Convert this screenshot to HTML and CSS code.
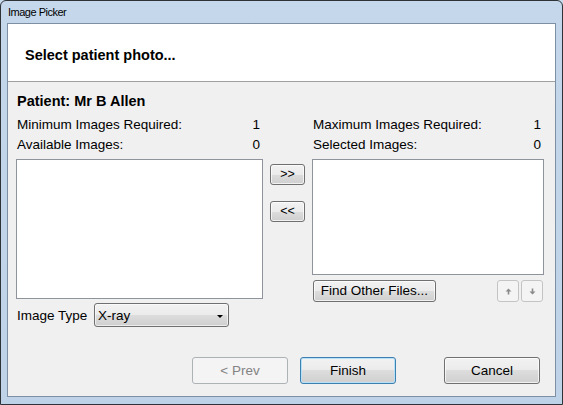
FILE: index.html
```html
<!DOCTYPE html>
<html>
<head>
<meta charset="utf-8">
<title>Image Picker</title>
<link rel="stylesheet" href="styles.css">
</head>
<body>
<div class="window">
  <div class="titlebar">Image Picker</div>
  <div class="client">
    <div class="header">Select patient photo...</div>
    <div class="body">
      <div class="patient">Patient: Mr B Allen</div>
      <div class="panes">
        <div class="col col-left">
          <div class="info">
            <div class="info-row"><span>Minimum Images Required:</span><span>1</span></div>
            <div class="info-row"><span>Available Images:</span><span>0</span></div>
          </div>
          <div class="listbox list-left"></div>
          <div class="type-row">
            <span class="type-label">Image Type</span>
            <div class="combo"><span>X-ray</span><span class="combo-arrow"></span></div>
          </div>
        </div>
        <div class="col col-mid">
          <button class="btn btn-move">&gt;&gt;</button>
          <button class="btn btn-move">&lt;&lt;</button>
        </div>
        <div class="col col-right">
          <div class="info">
            <div class="info-row"><span>Maximum Images Required:</span><span>1</span></div>
            <div class="info-row"><span>Selected Images:</span><span>0</span></div>
          </div>
          <div class="listbox list-right"></div>
          <div class="tools-row">
            <button class="btn btn-find">Find Other Files...</button>
            <div class="arrows">
              <button class="btn-arrow" aria-label="Move up"><svg width="7" height="7" viewBox="0 0 7 7"><path d="M3.5 0.5 L6.5 3.5 L4.3 3.5 L4.3 6.5 L2.7 6.5 L2.7 3.5 L0.5 3.5 Z" fill="#8a8a8a"/></svg></button>
              <button class="btn-arrow" aria-label="Move down"><svg width="7" height="7" viewBox="0 0 7 7"><path d="M3.5 6.5 L6.5 3.5 L4.3 3.5 L4.3 0.5 L2.7 0.5 L2.7 3.5 L0.5 3.5 Z" fill="#8a8a8a"/></svg></button>
            </div>
          </div>
        </div>
      </div>
      <div class="footer">
        <button class="btn btn-footer btn-disabled">&lt; Prev</button>
        <button class="btn btn-footer btn-default">Finish</button>
        <button class="btn btn-footer btn-cancel">Cancel</button>
      </div>
    </div>
  </div>
</div>
</body>
</html>
```

FILE: styles.css
```css
* { box-sizing: border-box; }

html, body {
  margin: 0;
  padding: 0;
  background: #c9dbee;
}

body {
  font-family: "Liberation Sans", Arial, sans-serif;
  font-size: 13.5px;
  color: #000;
}

.window {
  width: 563px;
  height: 405px;
  border: 1px solid #2e3338;
  border-radius: 6px 6px 0 0;
  background: linear-gradient(#c6d8ec, #c3d6ea 30px, #bfd3e8);
  padding: 0 6px 7px 6px;
  display: flex;
  flex-direction: column;
}

.titlebar {
  height: 22px;
  line-height: 22px;
  font-size: 11px;
  padding-left: 1px;
  color: #000;
  letter-spacing: -0.5px;
}

.client {
  flex: 1;
  border: 1px solid #7d8fa3;
  background: #f0f0f0;
  display: flex;
  flex-direction: column;
}

.header {
  height: 58px;
  background: #fff;
  border-bottom: 1px solid #a0a0a0;
  padding: 23px 0 0 17px;
  font-weight: bold;
  font-size: 14.5px;
  line-height: 16px;
}

.body {
  flex: 1;
  display: flex;
  flex-direction: column;
  padding: 0 15px 12px 8px;
}

.patient {
  margin-top: 11px;
  font-weight: bold;
  font-size: 14.5px;
  line-height: 16px;
  padding-left: 1px;
}

.panes {
  margin-top: 6px;
  display: grid;
  grid-template-columns: 247px 49px 232px;
}

.col {
  display: flex;
  flex-direction: column;
}

.info-row {
  display: flex;
  justify-content: space-between;
  line-height: 20px;
  padding: 0 3px 0 1px;
}

.listbox {
  margin-top: 4px;
  background: #fff;
  border: 1px solid #8f949c;
}

.list-left { height: 140px; }
.list-right { height: 116px; }

.type-row {
  margin-top: 4px;
  display: flex;
  align-items: center;
  height: 24px;
}

.type-label {
  width: 78px;
  padding-left: 1px;
}

.combo {
  width: 135px;
  height: 24px;
  border: 1px solid #707070;
  border-radius: 3px;
  background: linear-gradient(#f2f2f2 0%, #ebebeb 50%, #dddddd 50%, #cfcfcf 100%);
  box-shadow: inset 0 0 0 1px rgba(255,255,255,0.6);
  display: flex;
  align-items: center;
  justify-content: space-between;
  padding: 0 5px 0 3px;
}

.combo-arrow {
  width: 0;
  height: 0;
  border-left: 3px solid transparent;
  border-right: 3px solid transparent;
  border-top: 3px solid #000;
  margin-top: 2px;
}

.btn {
  font-family: "Liberation Sans", Arial, sans-serif;
  font-size: 13.5px;
  color: #000;
  border: 1px solid #707070;
  border-radius: 3px;
  background: linear-gradient(#f2f2f2 0%, #ebebeb 50%, #dddddd 50%, #cfcfcf 100%);
  box-shadow: inset 0 0 0 1px rgba(255,255,255,0.7);
  padding: 0;
  margin: 0;
  line-height: 1;
}

.col-mid {
  padding-top: 49px;
  padding-left: 7px;
  gap: 16px;
}

.btn-move {
  width: 35px;
  height: 21px;
  font-size: 12.5px;
}

.tools-row {
  margin-top: 5px;
  display: flex;
  justify-content: space-between;
  align-items: center;
  padding-left: 1px;
  padding-right: 1px;
}

.btn-find {
  width: 123px;
  height: 22px;
}

.arrows {
  display: flex;
  gap: 2px;
}

.btn-arrow {
  width: 22px;
  height: 22px;
  border: 1px solid #c2c4c6;
  border-radius: 3px;
  background: #f4f4f4;
  display: flex;
  align-items: center;
  justify-content: center;
  padding: 0;
}

.btn-arrow svg { display: block; }

.footer {
  margin-top: auto;
  display: flex;
  justify-content: flex-end;
}

.btn-footer {
  width: 96px;
  height: 27px;
}

.btn-disabled {
  border-color: #adb2b5;
  background: #f4f4f4;
  box-shadow: none;
  color: #838383;
}

.btn-default {
  margin-left: 12px;
  border-color: #3c7fb1;
  box-shadow: inset 0 0 0 1px #b8e0f6;
}

.btn-cancel {
  margin-left: 48px;
}
```
